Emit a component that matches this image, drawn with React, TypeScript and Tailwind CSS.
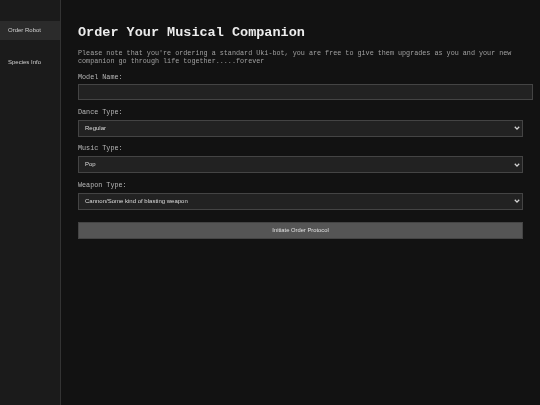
import { useState } from "react";

const navItems = [
  { label: "Order Robot", active: true },
  { label: "Species Info", active: false },
];

const fields = [
  { label: "Dance Type:", options: ["Regular", "Breakdance", "Robot"] },
  { label: "Music Type:", options: ["Pop", "Rock", "Jazz"] },
  { label: "Weapon Type:", options: ["Cannon/Some kind of blasting weapon", "Laser", "None"] },
];

const Chevron = () => (
  <svg
    className="pointer-events-none absolute right-[3px] top-1/2 -translate-y-1/2"
    width="6"
    height="5"
    viewBox="0 0 6 5"
  >
    <path d="M0.8 1.2 L3 3.6 L5.2 1.2" fill="none" stroke="#d4d4d4" strokeWidth="1.3" />
  </svg>
);

export default function App() {
  const [name, setName] = useState("");

  return (
    <div className="flex min-h-[405px] w-full bg-[#121212] font-['Liberation_Sans',Arial,sans-serif] [will-change:transform]">
      {/* Sidebar */}
      <aside className="flex w-[61px] shrink-0 flex-col gap-[13px] border-r border-[#333] bg-[#1b1b1b] pt-[21px]">
        {navItems.map((item) => (
          <div
            key={item.label}
            className={`flex h-[19px] items-center pl-[8px] text-[6px] text-[#d0d0d0] ${
              item.active ? "bg-[#2b2b2b]" : ""
            }`}
          >
            {item.label}
          </div>
        ))}
      </aside>

      {/* Main */}
      <main className="flex-1 px-[17px] pt-[25px] font-['Liberation_Mono','Courier_New',monospace]">
        <h1 className="text-[13.5px] leading-[16px] font-bold text-[#ececec]">
          Order Your Musical Companion
        </h1>
        <p className="mt-[8px] text-[6.75px] leading-[8px] text-[#a0a0a0]">
          Please note that you're ordering a standard Uki-bot, you are free to give them upgrades as you and your new
          companion go through life together.....forever
        </p>

        <div className="mt-[8px]">
          <label className="mb-[3px] block text-[6.75px] leading-[8px] text-[#b8b8b8]">Model Name:</label>
          <input
            value={name}
            onChange={(e) => setName(e.target.value)}
            className="box-content block h-[14px] w-full border border-[#444] bg-[#222] px-[4px] text-[6px] text-[#ddd] outline-none"
          />
        </div>

        {fields.map((f) => (
          <div key={f.label} className="mt-[7.5px]">
            <label className="mb-[4px] block text-[6.75px] leading-[8px] text-[#b8b8b8]">{f.label}</label>
            <div className="relative">
              <select className="block h-[17px] w-full appearance-none border border-[#444] bg-[#222] pl-[6px] font-['Liberation_Sans',Arial,sans-serif] text-[6px] text-[#dcdcdc] outline-none">
                {f.options.map((o) => (
                  <option key={o}>{o}</option>
                ))}
              </select>
              <Chevron />
            </div>
          </div>
        ))}

        <button className="mt-[12px] block h-[17px] w-full border border-[#444] bg-[#555] font-['Liberation_Sans',Arial,sans-serif] text-[5.8px] text-[#e0e0e0]">
          Initiate Order Protocol
        </button>
      </main>
    </div>
  );
}
